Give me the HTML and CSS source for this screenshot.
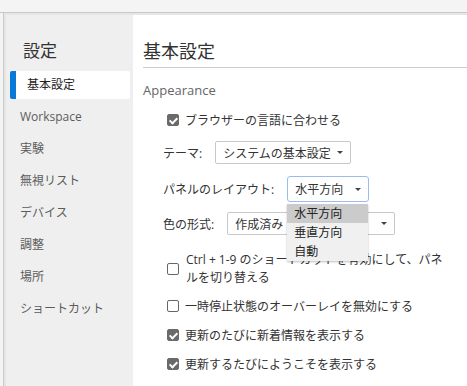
FILE: index.html
```html
<!DOCTYPE html>
<html lang="ja">
<head>
<meta charset="utf-8">
<title>設定</title>
<link rel="stylesheet" href="styles.css">
</head>
<body>
<div class="topbar"></div>
<div class="below">
  <div class="rail"></div>
  <div class="shell">
    <div class="dialog">
      <nav class="sidebar">
        <div class="side-title">設定</div>
        <ul class="side-list">
          <li class="side-item active">基本設定</li>
          <li class="side-item">Workspace</li>
          <li class="side-item">実験</li>
          <li class="side-item">無視リスト</li>
          <li class="side-item">デバイス</li>
          <li class="side-item">調整</li>
          <li class="side-item">場所</li>
          <li class="side-item">ショートカット</li>
        </ul>
      </nav>
      <main class="main">
        <h1 class="main-title">基本設定</h1>
        <div class="section-title">Appearance</div>
        <div class="rows">
          <label class="check-row row-first"><span class="cb checked"></span><span>ブラウザーの言語に合わせる</span></label>
          <div class="select-row row-theme">
            <span class="sel-label">テーマ:</span>
            <div class="select sel-theme"><span>システムの基本設定</span><span class="arrow"></span></div>
          </div>
          <div class="select-row row-panel">
            <span class="sel-label">パネルのレイアウト:</span>
            <div class="select-wrap">
              <div class="select sel-panel focused"><span>水平方向</span><span class="arrow"></span></div>
              <ul class="popup">
                <li class="popup-item hl">水平方向</li>
                <li class="popup-item">垂直方向</li>
                <li class="popup-item">自動</li>
              </ul>
            </div>
          </div>
          <div class="select-row row-color">
            <span class="sel-label">色の形式:</span>
            <div class="select sel-color"><span>作成済み</span><span class="arrow"></span></div>
          </div>
          <label class="check-row row-ctrl"><span class="cb"></span><span class="wrap-text">Ctrl + 1-9 のショートカットを有効にして、パネルを切り替える</span></label>
          <label class="check-row row-gap"><span class="cb"></span><span>一時停止状態のオーバーレイを無効にする</span></label>
          <label class="check-row row-gap"><span class="cb checked"></span><span>更新のたびに新着情報を表示する</span></label>
          <label class="check-row row-gap"><span class="cb checked"></span><span>更新するたびにようこそを表示する</span></label>
        </div>
      </main>
    </div>
  </div>
</div>
</body>
</html>
```

FILE: styles.css
```css
* { box-sizing: border-box; }
html, body { margin: 0; padding: 0; }
body {
  width: 467px;
  height: 386px;
  overflow: hidden;
  background: #f4f4f4;
  font-family: "Open Sans", "Noto Sans CJK JP", sans-serif;
  color: #333;
  font-size: 12px;
}
ul { list-style: none; margin: 0; padding: 0; }

.topbar {
  height: 13px;
  border-bottom: 1px solid #c9c9c9;
  background: #f4f4f4;
}
.below {
  display: flex;
  height: 373px;
}
.rail {
  width: 4px;
  flex: none;
  border-right: 1px solid #c9c9c9;
  background: #f4f4f4;
}
.shell {
  flex: 1;
  padding: 2px 0 0 2px;
  background: #e6e6e6;
}
.dialog {
  display: flex;
  height: 100%;
  background: #fff;
}

/* sidebar */
.sidebar {
  width: 127px;
  flex: none;
  background: #efefef;
  padding-top: 23px;
}
.side-title {
  font-family: "Noto Sans CJK JP", sans-serif;
  font-size: 17px;
  line-height: 24px;
  padding-left: 17px;
  color: #333;
}
.side-list {
  margin-top: 9px;
  display: flex;
  flex-direction: column;
  gap: 4px;
}
.side-item {
  height: 28px;
  line-height: 28px;
  margin: 0 3px 0 4px;
  padding-left: 10px;
  color: #5c5c5c;
  font-size: 12px;
  border-radius: 2px;
}
.side-item.active {
  background: #fff;
  color: #222;
  border-left: 6px solid #0a78d7;
  padding-left: 11px;
}

/* main */
.main {
  flex: 1;
  padding: 23px 0 0 10px;
  position: relative;
}
.main-title {
  margin: 0;
  font-family: "Noto Sans CJK JP", sans-serif;
  font-weight: normal;
  font-size: 18px;
  line-height: 24px;
  padding-bottom: 5px;
  border-bottom: 1px solid #cdcdcd;
  color: #333;
}
.section-title {
  margin-top: 13px;
  font-size: 13px;
  line-height: 18px;
  color: #666;
}
.rows {
  display: flex;
  flex-direction: column;
  padding-left: 20px;
}
.check-row {
  display: flex;
  align-items: center;
  gap: 6px;
  min-height: 20px;
  padding-left: 4px;
  color: #333;
}
.row-first { margin-top: 11px; }
.row-gap { margin-top: 9px; }
.row-ctrl {
  margin-top: 16px;
  line-height: 18px;
  gap: 7px;
}
.wrap-text { max-width: 262px; }

.cb {
  width: 12px;
  height: 12px;
  flex: none;
  border: 1px solid #666;
  border-radius: 2px;
  background: #fff;
  position: relative;
}
.cb.checked {
  background: #6a6a6a;
  border-color: #6a6a6a;
}
.cb.checked::after {
  content: "";
  position: absolute;
  left: 3px;
  top: 1px;
  width: 3px;
  height: 6px;
  border: solid #fff;
  border-width: 0 2px 2px 0;
  transform: rotate(45deg);
}

.select-row {
  display: flex;
  align-items: center;
  gap: 13px;
}
.row-theme { margin-top: 11px; }
.row-panel { margin-top: 12px; }
.row-color { margin-top: 10px; }
.sel-label { color: #333; }
.select {
  display: flex;
  align-items: center;
  justify-content: space-between;
  height: 23px;
  padding: 0 7px 0 7px;
  border: 1px solid #c8c8c8;
  border-radius: 2px;
  background: #fff;
  color: #333;
}
.sel-theme { width: 136px; }
.sel-panel {
  width: 82px;
  height: 26px;
  border: 1px solid #9cbcf0;
  border-radius: 3px;
}
.sel-color { width: 168px; }
.arrow {
  width: 0;
  height: 0;
  border-left: 3px solid transparent;
  border-right: 3px solid transparent;
  border-top: 3px solid #444;
}
.select-wrap { position: relative; }
.popup {
  position: absolute;
  left: 0;
  top: 28px;
  width: 81px;
  background: #f0f0f0;
  box-shadow: 0 1px 2px rgba(0,0,0,0.25);
  z-index: 2;
}
.popup-item {
  height: 19px;
  line-height: 19px;
  padding-left: 7px;
  color: #222;
}
.popup-item.hl { background: #cbcbcb; }
```
